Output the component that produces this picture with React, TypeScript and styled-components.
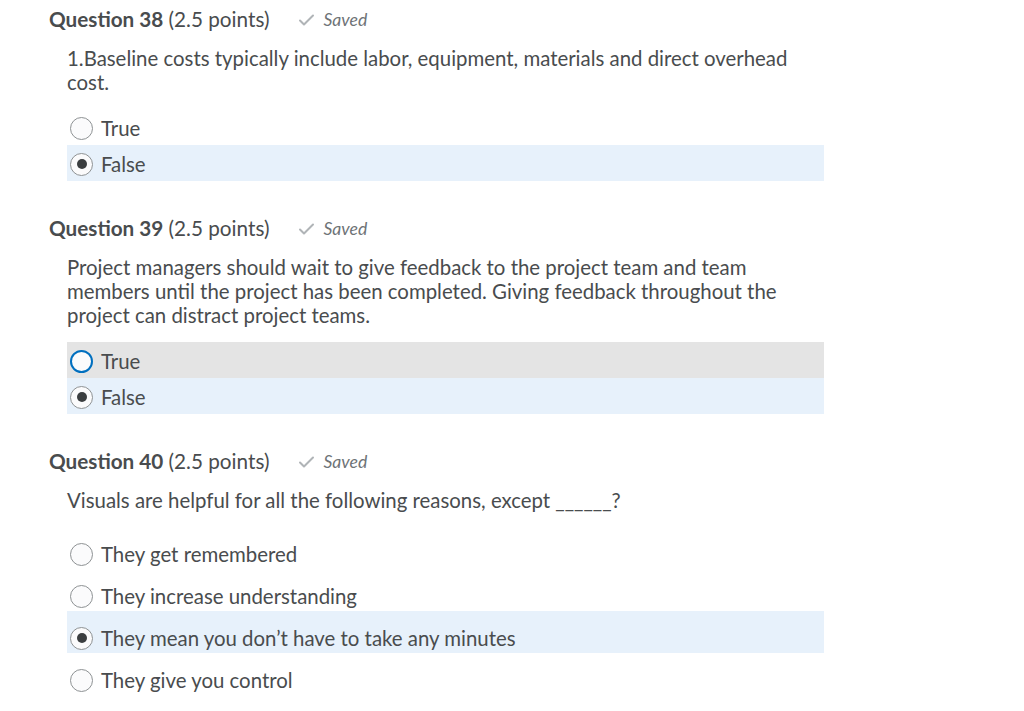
import styled, { createGlobalStyle } from "styled-components";

const GlobalStyle = createGlobalStyle`
  html, body {
    margin: 0;
    padding: 0;
    background: #ffffff;
  }
  body {
    font-family: Lato, "Open Sans", "Liberation Sans", sans-serif;
    color: #494c4e;
  }
`;

const Page = styled.div`
  padding: 7px 0 0 49px;
  display: flex;
  flex-direction: column;
  gap: 35px;
`;

const Question = styled.section`
  display: flex;
  flex-direction: column;
`;

const Header = styled.div`
  display: flex;
  align-items: center;
  height: 24px;
`;

const Title = styled.h2`
  margin: 0;
  font-size: 20.7px;
  line-height: 24px;
  font-weight: 400;
  color: #494c4e;

  strong {
    font-weight: 700;
  }
`;

const Saved = styled.span`
  display: flex;
  align-items: center;
  gap: 8px;
  margin-left: 29px;
  font-size: 17.6px;
  font-style: italic;
  color: #6e7376;
  svg {
    margin-top: 1px;
  }
`;

const Body = styled.div`
  margin-left: 18px;
  width: 757px;
`;

const Prompt = styled.p`
  margin: 15px 0 15px;
  font-size: 20.4px;
  line-height: 24px;
`;

const Options = styled.div`
  display: flex;
  flex-direction: column;
`;

const Row = styled.label<{ $tall?: boolean; $bg?: string }>`
  display: flex;
  align-items: center;
  gap: 8px;
  height: ${(p) => (p.$tall ? 42 : 36)}px;
  box-sizing: border-box;
  padding: ${(p) => (p.$tall ? "15px 0 3px 3px" : "7px 0 5px 3px")};
  background: ${(p) => p.$bg || "transparent"};
  font-size: 20.4px;
  line-height: 24px;
  color: #494c4e;
`;

const Radio = styled.span<{ $checked?: boolean; $focus?: boolean }>`
  flex: none;
  width: 23px;
  height: 23px;
  border-radius: 50%;
  box-sizing: border-box;
  border: ${(p) => (p.$focus ? "2px solid #006fbf" : "1px solid #8e9294")};
  background: #fbfbfc;
  display: flex;
  align-items: center;
  justify-content: center;

  &::after {
    content: "";
    display: ${(p) => (p.$checked ? "block" : "none")};
    width: 10px;
    height: 10px;
    border-radius: 50%;
    background: #3b3e40;
  }
`;

type Opt = { text: string; checked?: boolean; focus?: boolean; bg?: string };

type Q = {
  num: number;
  prompt: string;
  tall?: boolean;
  options: Opt[];
};

const SEL = "#e7f1fb";
const HOVER = "#e4e4e4";

const questions: Q[] = [
  {
    num: 38,
    prompt:
      "1.Baseline costs typically include labor, equipment, materials and direct overhead cost.",
    options: [{ text: "True" }, { text: "False", checked: true, bg: SEL }],
  },
  {
    num: 39,
    prompt:
      "Project managers should wait to give feedback to the project team and team members until the project has been completed. Giving feedback throughout the project can distract project teams.",
    options: [
      { text: "True", focus: true, bg: HOVER },
      { text: "False", checked: true, bg: SEL },
    ],
  },
  {
    num: 40,
    prompt: "Visuals are helpful for all the following reasons, except ______?",
    tall: true,
    options: [
      { text: "They get remembered" },
      { text: "They increase understanding" },
      { text: "They mean you don\u2019t have to take any minutes", checked: true, bg: SEL },
      { text: "They give you control" },
    ],
  },
];

function Check() {
  return (
    <svg width="17" height="14" viewBox="0 0 17 14">
      <polyline
        points="2,7.5 6,11.5 15,2.5"
        fill="none"
        stroke="#b0b4b7"
        strokeWidth="2"
        strokeLinecap="round"
        strokeLinejoin="round"
      />
    </svg>
  );
}

export default function App() {
  return (
    <>
      <GlobalStyle />
      <Page>
        {questions.map((q) => (
          <Question key={q.num}>
            <Header>
              <Title>
                <strong>Question {q.num}</strong> (2.5 points)
              </Title>
              <Saved>
                <Check />
                Saved
              </Saved>
            </Header>
            <Body>
              <Prompt>{q.prompt}</Prompt>
              <Options>
                {q.options.map((o) => (
                  <Row key={o.text} $tall={q.tall} $bg={o.bg}>
                    <Radio $checked={o.checked} $focus={o.focus} />
                    {o.text}
                  </Row>
                ))}
              </Options>
            </Body>
          </Question>
        ))}
      </Page>
    </>
  );
}
